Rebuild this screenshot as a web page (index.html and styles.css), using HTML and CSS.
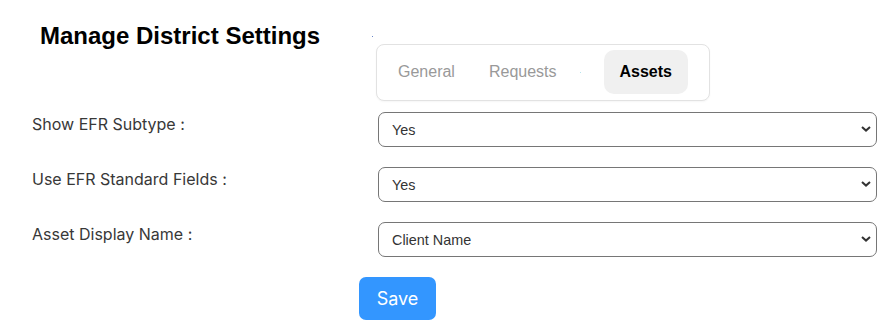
FILE: index.html
```html
<!DOCTYPE html>
<html lang="en">
<head>
<meta charset="utf-8">
<title>Manage District Settings</title>
<link rel="stylesheet" href="styles.css">
</head>
<body>
<div class="header">
  <h1 class="title">Manage District Settings</h1>
  <div class="tabs-wrap">
    <span class="speck"></span>
    <div class="tabs">
      <div class="tab">General</div>
      <div class="tab">Requests</div>
      <div class="tab tab-empty"><span class="dot"></span></div>
      <div class="tab tab-active">Assets</div>
    </div>
  </div>
</div>
<form class="form">
  <label class="label" for="s1">Show EFR Subtype :</label>
  <div class="select-wrap">
    <select id="s1" class="select"><option>Yes</option><option>No</option></select>
    <svg class="chev" viewBox="0 0 10 6" width="10" height="6"><path d="M1 1 L5 4.6 L9 1" fill="none" stroke="#333" stroke-width="2"/></svg>
  </div>
  <label class="label" for="s2">Use EFR Standard Fields :</label>
  <div class="select-wrap">
    <select id="s2" class="select"><option>Yes</option><option>No</option></select>
    <svg class="chev" viewBox="0 0 10 6" width="10" height="6"><path d="M1 1 L5 4.6 L9 1" fill="none" stroke="#333" stroke-width="2"/></svg>
  </div>
  <label class="label" for="s3">Asset Display Name :</label>
  <div class="select-wrap">
    <select id="s3" class="select"><option>Client Name</option></select>
    <svg class="chev" viewBox="0 0 10 6" width="10" height="6"><path d="M1 1 L5 4.6 L9 1" fill="none" stroke="#333" stroke-width="2"/></svg>
  </div>
</form>
<button class="save" type="button">Save</button>
</body>
</html>
```
FILE: styles.css
```css
body {
  margin: 0;
  background: #fff;
  font-family: Inter, "Noto Sans", sans-serif;
}
.header {
  display: grid;
  grid-template-columns: 376px auto;
  align-items: start;
}
.title {
  margin: 0;
  padding: 22px 0 0 40px;
  font: 700 24px/28px "Liberation Sans", Arial, sans-serif;
  color: #000;
}
.tabs-wrap {
  position: relative;
  padding-top: 44px;
}
.speck {
  position: absolute;
  left: -4px;
  top: 36px;
  width: 1px;
  height: 1px;
  background: #6a86c8;
}
.tabs {
  display: inline-flex;
  gap: 2px;
  height: 57px;
  box-sizing: border-box;
  padding: 5px 21px 6px 5px;
  border: 1px solid #e2e2e2;
  border-radius: 8px;
  box-shadow: 0 1px 2px rgba(0,0,0,0.04);
  background: #fff;
}
.tab {
  display: flex;
  align-items: center;
  padding: 0 16px;
  font: 400 16px/20px "Liberation Sans", Arial, sans-serif;
  color: #999;
  border-radius: 10px;
}
.tab-empty {
  padding: 0;
  width: 28px;
  justify-content: center;
  margin-left: -8px;
  margin-right: 7px;
}
.dot {
  width: 1px;
  height: 1px;
  background: #b7e4ee;
}
.tab-active {
  background: #f0f0f0;
  color: #000;
  font-weight: 700;
}
.form {
  display: grid;
  grid-template-columns: 346px 499px;
  row-gap: 20px;
  margin-top: 11px;
  padding-left: 32px;
}
.label {
  font-size: 16px;
  line-height: 24px;
  color: #383838;
}
.select-wrap {
  position: relative;
}
.select {
  appearance: none;
  -webkit-appearance: none;
  display: block;
  width: 100%;
  height: 35px;
  box-sizing: border-box;
  margin: 0;
  padding: 0 30px 0 13px;
  border: 1px solid #767676;
  border-radius: 7px;
  background: #fff;
  font: 400 14.4px "Liberation Sans", Arial, sans-serif;
  color: #333;
}
.chev {
  position: absolute;
  right: 6px;
  top: 14px;
  pointer-events: none;
}
.save {
  display: block;
  margin: 20px 0 0 359px;
  width: 77px;
  height: 43px;
  border: 0;
  border-radius: 7px;
  background: #3396ff;
  color: #fff;
  font: 400 18px Inter, sans-serif;
}
```
